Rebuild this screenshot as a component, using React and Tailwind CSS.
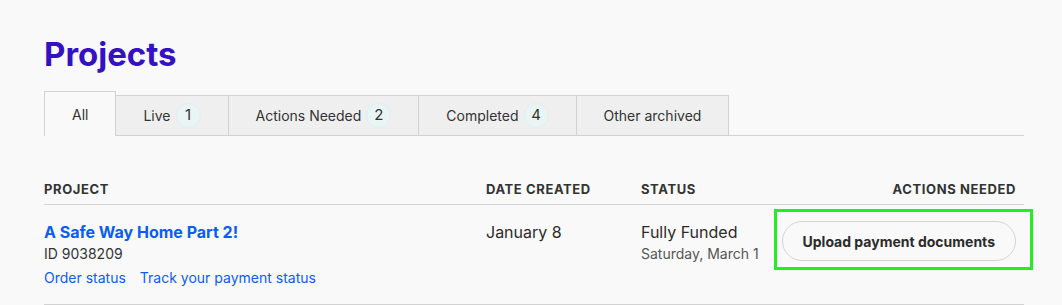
import React from "react";

const tabs = [
  { label: "All", active: true },
  { label: "Live", count: 1 },
  { label: "Actions Needed", count: 2 },
  { label: "Completed", count: 4 },
  { label: "Other archived" },
];

const Tab = ({ tab, first }) => {
  if (tab.active) {
    return (
      <div
        className={`h-[45px] -mb-px px-[27px] flex items-center bg-[#f9f9f9] border-t border-r border-[#d2d2d2] ${
          first ? "border-l" : ""
        }`}
      >
        {tab.label}
      </div>
    );
  }
  return (
    <div className="h-[40px] px-[27px] flex items-center gap-[5px] bg-[#efefef] border-t border-r border-[#d2d2d2]">
      <span>{tab.label}</span>
      {tab.count != null && (
        <span className="w-[25px] h-[25px] rounded-full bg-[#e9f5f5] border border-[#e2eeee] flex items-center justify-center text-[15px]">
          {tab.count}
        </span>
      )}
    </div>
  );
};

export default function App() {
  return (
    <div
      className="min-h-[305px] bg-[#f9f9f9] text-[#2b2b2b]"
      style={{ fontFamily: "Inter, 'Noto Sans', sans-serif" }}
    >
      <div className="pl-[44px] pt-[34px] w-[1024px]">
        <h1 className="text-[33px] leading-[40px] font-bold text-[#3511c4] tracking-[0px]">
          Projects
        </h1>

        {/* Tabs */}
        <div className="mt-[17px] flex items-end border-b border-[#d2d2d2] text-[14px] text-[#333]">
          {tabs.map((tab, i) => (
            <Tab key={tab.label} tab={tab} first={i === 0} />
          ))}
        </div>

        {/* Table header */}
        <div className="mt-[43px] grid grid-cols-[442px_155px_1fr_auto] pb-[5px] border-b border-[#d2d2d2] text-[13px] leading-5 font-bold uppercase tracking-[0.6px] text-[#333]">
          <div>Project</div>
          <div>Date Created</div>
          <div>Status</div>
          <div className="pr-2 text-right">Actions Needed</div>
        </div>

        {/* Row */}
        <div className="grid grid-cols-[442px_155px_1fr_auto] pt-[16px] pb-[16px] border-b border-[#d2d2d2]">
          <div>
            <a className="block text-[16px] leading-[22px] font-bold text-[#0b5cf2]">
              A Safe Way Home Part 2!
            </a>
            <div className="mt-px text-[14px] leading-5 text-[#333]">ID 9038209</div>
            <div className="mt-1 flex gap-[14px] text-[14px] leading-5 text-[#0b5cf2]">
              <a>Order status</a>
              <a>Track your payment status</a>
            </div>
          </div>
          <div className="text-[16px] leading-[22px] text-[#2b2b2b]">January 8</div>
          <div>
            <div className="text-[16px] leading-[22px] text-[#2b2b2b]">Fully Funded</div>
            <div className="mt-px text-[14px] leading-5 text-[#555]">Saturday, March 1</div>
          </div>
          <div className="pr-2 flex justify-end items-start">
            <div className="relative">
              <button className="block h-10 px-5 rounded-full border border-[#d4d4d4] bg-[#f9f9f9] text-[14px] font-bold text-[#2b2b2b]">
                Upload payment documents
              </button>
              <div className="absolute -left-2 -right-[17px] -top-3 -bottom-[9px] border-[3px] border-[#22ee22] pointer-events-none" />
            </div>
          </div>
        </div>
      </div>
    </div>
  );
}
